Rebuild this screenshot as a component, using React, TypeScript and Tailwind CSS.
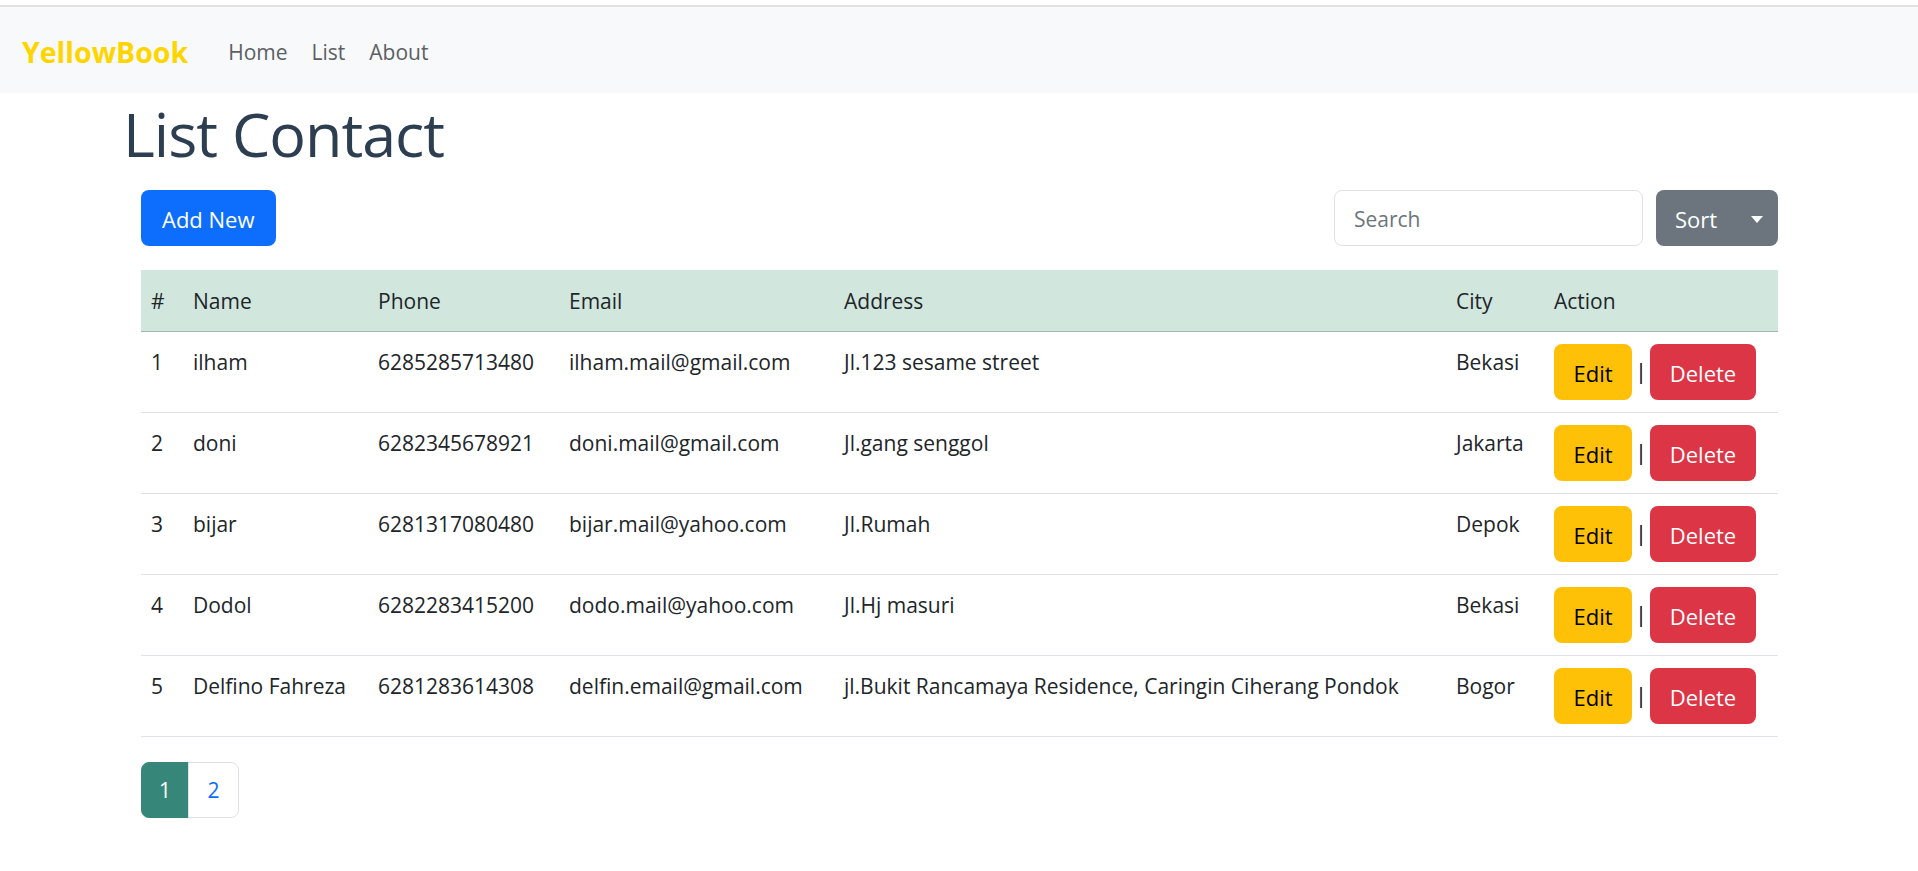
import { useState } from 'react'

const contacts = [
  { id: 1, name: 'ilham', phone: '6285285713480', email: 'ilham.mail@gmail.com', address: 'Jl.123 sesame street', city: 'Bekasi' },
  { id: 2, name: 'doni', phone: '6282345678921', email: 'doni.mail@gmail.com', address: 'Jl.gang senggol', city: 'Jakarta' },
  { id: 3, name: 'bijar', phone: '6281317080480', email: 'bijar.mail@yahoo.com', address: 'Jl.Rumah', city: 'Depok' },
  { id: 4, name: 'Dodol', phone: '6282283415200', email: 'dodo.mail@yahoo.com', address: 'Jl.Hj masuri', city: 'Bekasi' },
  {
    id: 5,
    name: 'Delfino Fahreza',
    phone: '6281283614308',
    email: 'delfin.email@gmail.com',
    address: 'jl.Bukit Rancamaya Residence, Caringin Ciherang Pondok',
    city: 'Bogor',
  },
]

const navLinks = ['Home', 'List', 'About']

function Navbar() {
  return (
    <div className="pt-[5px]">
      <nav className="flex h-[88px] items-center border-t-2 border-[#e1e2df] bg-[#f8f9fa] pl-[22px] pt-[5px]">
        <span className="text-[28.5px] font-bold leading-none text-[#ffd500]">YellowBook</span>
        <ul className="ml-[40px] flex gap-[24px]">
          {navLinks.map((link) => (
            <li key={link} className="text-[21px] text-[#5c5f63]">
              {link}
            </li>
          ))}
        </ul>
      </nav>
    </div>
  )
}

export default function App() {
  const [page, setPage] = useState(1)

  return (
    <div className="min-h-screen bg-white font-['Open_Sans',sans-serif] text-[#212529]">
      <Navbar />

      <main className="pl-[123px] pr-[140px]">
        <h1 className="mt-[4px] text-[61px] font-medium leading-[1.2] tracking-[-1px] text-[#2c3e50]">List Contact</h1>

        <div className="pl-[18px]">
          <div className="mt-[20px] flex h-[56px] items-center justify-between">
            <button className="h-[56px] rounded-lg bg-[#0d6efd] px-[21px] pt-[3px] text-[22px] text-white">Add New</button>
            <div className="flex gap-[13px]">
              <input
                type="text"
                placeholder="Search"
                className="h-[56px] w-[309px] rounded-lg border border-[#dee2e6] bg-white px-[19px] pt-[2px] text-[21px] outline-none placeholder:text-[#6c757d]"
              />
              <button className="flex h-[56px] w-[122px] items-center justify-between rounded-lg bg-[#6c757d] pl-[19px] pr-[15px] pt-[2px] text-[22px] text-white">
                <span>Sort</span>
                <span className="h-0 w-0 border-x-[6px] border-t-[7px] border-x-transparent border-t-white" />
              </button>
            </div>
          </div>

          <table className="mt-[24px] w-full table-fixed border-collapse text-[21px] leading-[1.5]">
            <colgroup>
              <col className="w-[42px]" />
              <col className="w-[185px]" />
              <col className="w-[191px]" />
              <col className="w-[275px]" />
              <col className="w-[612px]" />
              <col className="w-[98px]" />
              <col className="w-[234px]" />
            </colgroup>
            <thead>
              <tr className="h-[61px] border-b border-[#a7b5ae] bg-[#d1e7dd] text-left">
                {['#', 'Name', 'Phone', 'Email', 'Address', 'City', 'Action'].map((h) => (
                  <th key={h} className="px-[10px] pt-[2px] align-middle font-normal">
                    {h}
                  </th>
                ))}
              </tr>
            </thead>
            <tbody>
              {contacts.map((c) => (
                <tr key={c.id} className="h-[81px] border-b border-[#dee2e6]">
                  <td className="px-[10px] pt-[15px] align-top">{c.id}</td>
                  <td className="px-[10px] pt-[15px] align-top">{c.name}</td>
                  <td className="px-[10px] pt-[15px] align-top">{c.phone}</td>
                  <td className="px-[10px] pt-[15px] align-top">{c.email}</td>
                  <td className="whitespace-nowrap px-[10px] pt-[15px] align-top">{c.address}</td>
                  <td className="px-[10px] pt-[15px] align-top">{c.city}</td>
                  <td className="px-[10px] pt-[12px] align-top">
                    <div className="flex items-center text-[22px]">
                      <button className="h-[56px] w-[78px] rounded-lg bg-[#ffc107] pt-[3px] text-black">Edit</button>
                      <span className="w-[18px] text-center text-[21px] text-black">|</span>
                      <button className="h-[56px] w-[106px] rounded-lg bg-[#dc3545] pt-[3px] text-white">Delete</button>
                    </div>
                  </td>
                </tr>
              ))}
            </tbody>
          </table>

          <div className="mt-[25px] flex text-[21px]">
            <button
              onClick={() => setPage(1)}
              className={`h-[56px] w-[48px] rounded-l-lg border pt-[2px] ${page === 1 ? 'border-[#368779] bg-[#368779] text-white' : 'border-[#dee2e6] bg-white text-[#0d6efd]'}`}
            >
              1
            </button>
            <button
              onClick={() => setPage(2)}
              className={`-ml-px h-[56px] w-[51px] rounded-r-lg border pt-[2px] ${page === 2 ? 'border-[#368779] bg-[#368779] text-white' : 'border-[#dee2e6] bg-white text-[#0d6efd]'}`}
            >
              2
            </button>
          </div>
        </div>
      </main>
    </div>
  )
}
